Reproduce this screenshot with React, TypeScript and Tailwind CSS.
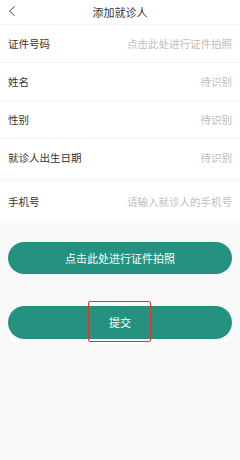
import { ChevronLeft } from 'lucide-react'

const rows = [
  { label: '证件号码', hint: '点击此处进行证件拍照' },
  { label: '姓名', hint: '待识别' },
  { label: '性别', hint: '待识别' },
  { label: '就诊人出生日期', hint: '待识别' },
]

function Row({ label, hint, last }: { label: string; hint: string; last?: boolean }) {
  return (
    <div
      className={`flex h-[38px] items-center justify-between px-2 ${last ? '' : 'border-b border-[#f3f3f3]'}`}
    >
      <span className="text-[10.5px] text-[#333]">{label}</span>
      <span className="text-[10.5px] text-[#bdbdbd]">{hint}</span>
    </div>
  )
}

export default function App() {
  return (
    <div
      className="min-h-[460px] bg-[#f9f9f9]"
      style={{ fontFamily: '"Noto Sans CJK SC", "Noto Sans", sans-serif' }}
    >
      <header className="relative flex h-[25px] items-center justify-center border-b border-[#f3f3f3] bg-white">
        <ChevronLeft className="absolute left-[3px] top-[2px] h-[18px] w-[18px] text-[#333]" strokeWidth={1.3} />
        <h1 className="text-[11px] text-[#333]">添加就诊人</h1>
      </header>

      <section className="bg-white">
        {rows.map((r, i) => (
          <Row key={r.label} label={r.label} hint={r.hint} last={i === rows.length - 1} />
        ))}
      </section>

      <section className="mt-[6px] bg-white">
        <Row label="手机号" hint="请输入就诊人的手机号" last />
      </section>

      <div className="flex flex-col gap-[32px] px-2 pt-[21px]">
        <button className="h-[32px] w-full rounded-full bg-[#24927f] text-[11px] text-white">
          点击此处进行证件拍照
        </button>
        <div className="relative">
          <button className="h-[33px] w-full rounded-full bg-[#24927f] text-[11px] text-white">提交</button>
          <div className="pointer-events-none absolute left-[80px] top-[-5px] h-[41px] w-[63px] rounded-[2px] border border-[#d9362f]" />
        </div>
      </div>
    </div>
  )
}
